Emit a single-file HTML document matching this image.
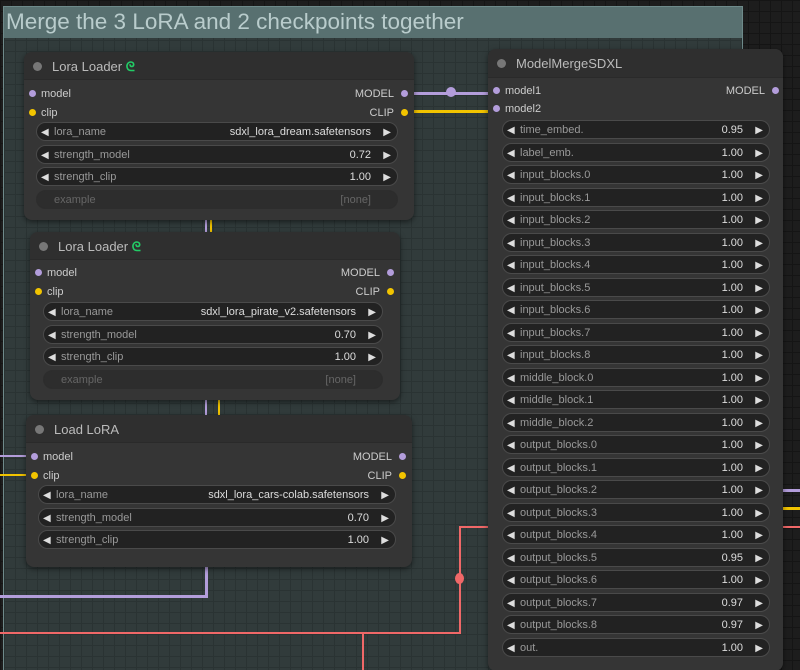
<!DOCTYPE html>
<html><head><meta charset="utf-8"><style>
*{margin:0;padding:0;box-sizing:border-box}
html,body{width:800px;height:670px;overflow:hidden}
body{position:relative;font-family:"Liberation Sans",sans-serif;background:#1d1d1d;
background-image:linear-gradient(#151515 1px,transparent 1px),linear-gradient(90deg,#151515 1px,transparent 1px);background-size:11px 11px}
.grp{position:absolute;left:3px;top:6px;width:740px;height:664px;border:1px solid #6e8a8a;border-bottom:none;background:#313b3b;
background-image:linear-gradient(#2a3333 1px,transparent 1px),linear-gradient(90deg,#2a3333 1px,transparent 1px);background-size:11px 11px}
.gt{position:absolute;left:0;top:0;right:0;height:31px;background:#587070;color:#b9cccc;font-size:22.5px;padding:2px 0 0 2px;white-space:nowrap}
.node{position:absolute;background:#353535;border-radius:8px;box-shadow:0 2px 6px rgba(0,0,0,.5)}
.ttl{height:28px;background:#2f2f2f;border-radius:8px 8px 0 0;color:#bbb;font-size:13px;line-height:29px;padding-left:28px;position:relative;border-bottom:1px solid #2a2a2a}
.ttl:before{content:"";position:absolute;left:9px;top:10px;width:9px;height:9px;border-radius:50%;background:#777}
.row{position:absolute;font-size:11px;color:#ccc;margin-top:1px}
.dot{position:absolute;width:7px;height:7px;border-radius:50%}
.w{position:absolute;height:19px;border-radius:10px;background:#222;border:1px solid #4a4a4a;font-size:11px;color:#999;line-height:19px}
.w .l{position:absolute;left:17px}
.w .v{position:absolute;right:26px;color:#ddd}
.w:before{content:"◀";position:absolute;left:4px;color:#ddd;font-size:10px}
.w:after{content:"▶";position:absolute;right:6px;color:#ddd;font-size:10px}
.w.ex{background:#2d2d2d;border-color:#2d2d2d}
.w.ex:before,.w.ex:after{content:""}
.w.ex .l,.w.ex .v{color:#666}
.ln{position:absolute}
</style></head><body>
<div class="grp"><div class="gt">Merge the 3 LoRA and 2 checkpoints together</div></div>

<div class="ln" style="left:404px;top:92px;width:90px;height:3px;background:#b39ddb"></div>
<div class="ln" style="left:446px;top:87px;width:10px;height:10px;border-radius:50%;background:#b39ddb"></div>
<div class="ln" style="left:404px;top:110px;width:90px;height:3px;background:#f2c400"></div>
<div class="ln" style="left:205px;top:220px;width:2px;height:12px;background:#b39ddb"></div>
<div class="ln" style="left:210px;top:220px;width:2px;height:12px;background:#f2c400"></div>
<div class="ln" style="left:205px;top:400px;width:2px;height:15px;background:#b39ddb"></div>
<div class="ln" style="left:218px;top:400px;width:2px;height:15px;background:#f2c400"></div>
<div class="ln" style="left:0;top:455px;width:30px;height:2px;background:#b39ddb"></div>
<div class="ln" style="left:0;top:474px;width:30px;height:2px;background:#f2c400"></div>
<div class="ln" style="left:205px;top:567px;width:3px;height:30px;background:#b39ddb"></div>
<div class="ln" style="left:0;top:595px;width:208px;height:3px;background:#b39ddb"></div>
<div class="ln" style="left:0;top:632px;width:461px;height:2px;background:#f06868"></div>
<div class="ln" style="left:459px;top:527px;width:2px;height:107px;background:#f06868"></div>
<div class="ln" style="left:459px;top:526px;width:30px;height:2px;background:#f06868"></div>
<div class="ln" style="left:455px;top:573px;width:9px;height:11px;border-radius:50%;background:#f06868"></div>
<div class="ln" style="left:362px;top:632px;width:2px;height:40px;background:#f06868"></div>
<div class="ln" style="left:783px;top:489px;width:17px;height:3px;background:#b39ddb"></div>
<div class="ln" style="left:783px;top:507px;width:17px;height:3px;background:#f2c400"></div>
<div class="ln" style="left:783px;top:526px;width:17px;height:2px;background:#f06868"></div>

<div class="node" style="left:24px;top:52px;width:390px;height:168px">
<div class="ttl">Lora Loader <span style="color:#22cc66;font-weight:bold">ᘓ</span></div>
<div class="dot" style="left:5px;top:38px;background:#b39ddb"></div><div class="row" style="left:17px;top:35px">model</div>
<div class="dot" style="left:5px;top:57px;background:#f2c400"></div><div class="row" style="left:17px;top:54px">clip</div>
<div class="row" style="right:20px;top:35px">MODEL</div><div class="dot" style="right:6px;top:38px;background:#b39ddb"></div>
<div class="row" style="right:20px;top:54px">CLIP</div><div class="dot" style="right:6px;top:57px;background:#f2c400"></div>
<div class="w" style="left:12px;top:70px;width:362px"><span class="l">lora_name</span><span class="v">sdxl_lora_dream.safetensors</span></div>
<div class="w" style="left:12px;top:93px;width:362px"><span class="l">strength_model</span><span class="v">0.72</span></div>
<div class="w" style="left:12px;top:115px;width:362px"><span class="l">strength_clip</span><span class="v">1.00</span></div>
<div class="w ex" style="left:12px;top:138px;width:362px"><span class="l">example</span><span class="v">[none]</span></div>
</div>

<div class="node" style="left:30px;top:232px;width:370px;height:168px">
<div class="ttl">Lora Loader <span style="color:#22cc66;font-weight:bold">ᘓ</span></div>
<div class="dot" style="left:5px;top:37px;background:#b39ddb"></div><div class="row" style="left:17px;top:34px">model</div>
<div class="dot" style="left:5px;top:56px;background:#f2c400"></div><div class="row" style="left:17px;top:53px">clip</div>
<div class="row" style="right:20px;top:34px">MODEL</div><div class="dot" style="right:6px;top:37px;background:#b39ddb"></div>
<div class="row" style="right:20px;top:53px">CLIP</div><div class="dot" style="right:6px;top:56px;background:#f2c400"></div>
<div class="w" style="left:13px;top:70px;width:340px"><span class="l">lora_name</span><span class="v">sdxl_lora_pirate_v2.safetensors</span></div>
<div class="w" style="left:13px;top:93px;width:340px"><span class="l">strength_model</span><span class="v">0.70</span></div>
<div class="w" style="left:13px;top:115px;width:340px"><span class="l">strength_clip</span><span class="v">1.00</span></div>
<div class="w ex" style="left:13px;top:138px;width:340px"><span class="l">example</span><span class="v">[none]</span></div>
</div>

<div class="node" style="left:26px;top:415px;width:386px;height:152px">
<div class="ttl">Load LoRA</div>
<div class="dot" style="left:5px;top:38px;background:#b39ddb"></div><div class="row" style="left:17px;top:35px">model</div>
<div class="dot" style="left:5px;top:57px;background:#f2c400"></div><div class="row" style="left:17px;top:54px">clip</div>
<div class="row" style="right:20px;top:35px">MODEL</div><div class="dot" style="right:6px;top:38px;background:#b39ddb"></div>
<div class="row" style="right:20px;top:54px">CLIP</div><div class="dot" style="right:6px;top:57px;background:#f2c400"></div>
<div class="w" style="left:12px;top:70px;width:358px"><span class="l">lora_name</span><span class="v">sdxl_lora_cars-colab.safetensors</span></div>
<div class="w" style="left:12px;top:93px;width:358px"><span class="l">strength_model</span><span class="v">0.70</span></div>
<div class="w" style="left:12px;top:115px;width:358px"><span class="l">strength_clip</span><span class="v">1.00</span></div>
</div>

<div class="node" style="left:488px;top:49px;width:295px;height:622px">
<div class="ttl" style="height:29px;line-height:30px">ModelMergeSDXL</div>
<div class="dot" style="left:5px;top:38px;background:#b39ddb"></div><div class="row" style="left:17px;top:35px">model1</div>
<div class="dot" style="left:5px;top:56px;background:#b39ddb"></div><div class="row" style="left:17px;top:53px">model2</div>
<div class="row" style="right:18px;top:35px">MODEL</div><div class="dot" style="right:4px;top:38px;background:#b39ddb"></div>
<div id="ws"></div>
</div>
<script>
var n=[["time_embed.","0.95"],["label_emb.","1.00"]];
for(var i=0;i<9;i++)n.push(["input_blocks."+i,"1.00"]);
for(i=0;i<3;i++)n.push(["middle_block."+i,"1.00"]);
var o=["1.00","1.00","1.00","1.00","1.00","0.95","1.00","0.97","0.97"];
for(i=0;i<9;i++)n.push(["output_blocks."+i,o[i]]);
n.push(["out.","1.00"]);
var h="";
for(i=0;i<n.length;i++){h+='<div class="w" style="left:14px;top:'+(71+i*22.52)+'px;width:268px"><span class="l">'+n[i][0]+'</span><span class="v">'+n[i][1]+'</span></div>';}
document.getElementById("ws").innerHTML=h;
</script>
</body></html>
